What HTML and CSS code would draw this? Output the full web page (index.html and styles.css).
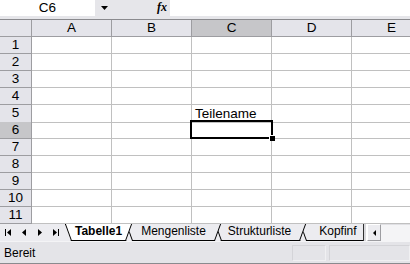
FILE: index.html
```html
<!DOCTYPE html>
<html lang="de">
<head>
  <meta charset="UTF-8">
  <title>Tabelle1</title>
  <link rel="stylesheet" href="styles.css">
</head>
<body>
  <!-- Formula Bar -->
  <div class="formula-bar">
    <div class="name-box">C6</div>
    <div class="name-drop">
      <svg width="7" height="4" viewBox="0 0 7 4"><path d="M0 0h7L3.5 4z" fill="#000"/></svg>
    </div>
    <div class="fx">fx</div>
    <div class="formula-input"></div>
  </div>

  <!-- Sheet -->
  <div class="sheet">
    <div class="row head">
      <div class="corner"></div><div>A</div><div>B</div><div class="sel">C</div><div>D</div><div>E</div>
    </div>
    <div class="row"><div class="rh">1</div><div></div><div></div><div></div><div></div><div></div></div>
    <div class="row"><div class="rh">2</div><div></div><div></div><div></div><div></div><div></div></div>
    <div class="row"><div class="rh">3</div><div></div><div></div><div></div><div></div><div></div></div>
    <div class="row"><div class="rh">4</div><div></div><div></div><div></div><div></div><div></div></div>
    <div class="row"><div class="rh">5</div><div></div><div></div><div class="text">Teilename</div><div></div><div></div></div>
    <div class="row"><div class="rh sel">6</div><div></div><div></div><div class="active"></div><div></div><div></div></div>
    <div class="row"><div class="rh">7</div><div></div><div></div><div></div><div></div><div></div></div>
    <div class="row"><div class="rh">8</div><div></div><div></div><div></div><div></div><div></div></div>
    <div class="row"><div class="rh">9</div><div></div><div></div><div></div><div></div><div></div></div>
    <div class="row"><div class="rh">10</div><div></div><div></div><div></div><div></div><div></div></div>
    <div class="row"><div class="rh">11</div><div></div><div></div><div></div><div></div><div></div></div>
  </div>

  <!-- Sheet Tabs -->
  <div class="tab-bar">
    <div class="tab-nav">
      <span class="nav-btn"><svg width="6" height="7" viewBox="0 0 6 7"><rect width="1" height="7"/><path d="M6 0v7L2 3.5z"/></svg></span>
      <span class="nav-btn"><svg width="4" height="7" viewBox="0 0 4 7"><path d="M4 0v7L0 3.5z"/></svg></span>
      <span class="nav-btn"><svg width="4" height="7" viewBox="0 0 4 7"><path d="M0 0v7L4 3.5z"/></svg></span>
      <span class="nav-btn"><svg width="6" height="7" viewBox="0 0 6 7"><path d="M0 0v7L4 3.5z"/><rect x="5" width="1" height="7"/></svg></span>
    </div>
    <div class="tabs">
      <div class="tab active"><span class="tab-bg"></span><span class="tab-label">Tabelle1</span></div>
      <div class="tab t2"><span class="tab-bg"></span><span class="tab-label">Mengenliste</span></div>
      <div class="tab t3"><span class="tab-bg"></span><span class="tab-label">Strukturliste</span></div>
      <div class="tab t4"><span class="tab-bg"></span><span class="tab-label">Kopfinf</span></div>
    </div>
    <div class="tab-split"></div>
    <div class="hscroll">
      <span class="scroll-btn"><svg width="3" height="6" viewBox="0 0 3 6"><path d="M3 0v6L0 3z"/></svg></span>
      <span class="scroll-track"></span>
    </div>
  </div>

  <!-- Status Bar -->
  <div class="status-bar">
    <span class="status-text">Bereit</span>
    <span class="panel"></span>
    <span class="panel wide"></span>
  </div>
</body>
</html>
```

FILE: styles.css
```css
/* General */
body {
  margin: 0;
  width: 410px;
  height: 264px;
  overflow: hidden;
  font-family: 'Liberation Sans', Arial, sans-serif;
  font-size: 13.5px;
  color: #000;
  background: #fff;
}

/* Formula Bar */
.formula-bar {
  display: flex;
  height: 19px;
  background: #e6e6ea;
  border-bottom: 1px solid #8a8a8e;
}

.name-box {
  width: 95px;
  height: 16px;
  line-height: 16px;
  background: #fff;
  text-align: center;
}

.name-drop {
  width: 16px;
  height: 16px;
  display: flex;
  align-items: center;
  justify-content: center;
  padding-left: 1px;
}

.fx {
  width: 58px;
  height: 16px;
  line-height: 15px;
  text-align: right;
  padding-right: 3px;
  box-sizing: border-box;
  font-family: 'Liberation Serif', serif;
  font-style: italic;
  font-weight: bold;
  font-size: 12px;
}

.formula-input {
  flex: 1;
  height: 16px;
  background: #fff;
}

/* Sheet Grid */
.sheet {
  width: 410px;
  overflow: hidden;
}

.row {
  display: grid;
  grid-template-columns: 32px repeat(5, 80px);
  height: 17px;
}

.row > div {
  box-sizing: border-box;
  border-right: 1px solid #c0c0c0;
  border-bottom: 1px solid #c0c0c0;
  line-height: 16px;
}

.row.head > div,
.row > .rh {
  background: #e4e4ea;
  border-right-color: #9d9da1;
  border-bottom-color: #9d9da1;
  text-align: center;
}

.row > .sel,
.row.head > .sel {
  background: #c6c6c9;
}

.row > .text {
  padding-left: 3px;
  padding-top: 1px;
}

.row > .active {
  position: relative;
}

.row > .active::after {
  content: '';
  position: absolute;
  top: -2px;
  left: -2px;
  right: -2px;
  bottom: -1px;
  border: 2px solid #000;
}

.row > .active::before {
  content: '';
  position: absolute;
  right: -4px;
  bottom: -3px;
  width: 5px;
  height: 5px;
  background: #000;
  border-left: 1px solid #fff;
  border-top: 1px solid #fff;
  z-index: 1;
}

/* Sheet Tabs */
.tab-bar {
  display: flex;
  height: 17px;
  background: #ececf0;
}

.tab-nav {
  display: flex;
  width: 65px;
  flex-shrink: 0;
}

.nav-btn {
  width: 16px;
  display: flex;
  align-items: center;
  justify-content: center;
}

.tabs {
  display: flex;
  width: 298px;
  overflow: hidden;
  flex-shrink: 0;
}

.tab {
  position: relative;
  height: 17px;
  padding: 0 15px;
  margin-right: -6px;
  font-size: 12px;
  line-height: 15px;
  white-space: nowrap;
}

.tab.active {
  padding: 0 10px;
  font-weight: bold;
  z-index: 5;
}

.tab.t2 { z-index: 4; }
.tab.t3 { z-index: 3; padding-left: 13px; }
.tab.t4 { z-index: 2; padding: 0 20px 0 19px; }

.tab-bg {
  position: absolute;
  inset: 0;
  background: #ececf0;
  border-bottom: 1px solid #000;
  clip-path: polygon(0 0, 100% 0, calc(100% - 6px) 100%, 6px 100%);
}

.tab.active .tab-bg {
  background: #fff;
}

.tab-label {
  position: relative;
}

.tab::before,
.tab::after {
  content: '';
  position: absolute;
  top: 0;
  width: 1px;
  height: 17px;
  background: #000;
  z-index: 1;
}

.tab::before {
  left: 3px;
  transform: skewX(20deg);
}

.tab::after {
  right: 3px;
  transform: skewX(-20deg);
}

.tab-split {
  width: 2px;
  flex-shrink: 0;
  background: #d8d8dc;
  border-left: 1px solid #303030;
  border-right: 1px solid #fff;
}

.hscroll {
  display: flex;
  flex: 1;
}

.scroll-btn {
  width: 12px;
  display: flex;
  align-items: center;
  justify-content: center;
  background: #ececf0;
  border-top: 1px solid #fff;
  border-left: 1px solid #fff;
  border-right: 1px solid #9d9da1;
  border-bottom: 1px solid #9d9da1;
}

.scroll-track {
  flex: 1;
  background: #f4f4f6;
  border-top: 1px solid #e0e0e4;
}

/* Status Bar */
.status-bar {
  display: flex;
  align-items: center;
  height: 21px;
  background: #e4e4e8;
  border-top: 1px solid #f4f4f6;
  border-bottom: 1px solid #8a8a8e;
  font-size: 12px;
}

.status-text {
  padding-left: 4px;
  width: 288px;
}

.panel {
  height: 14px;
  width: 32px;
  margin-right: 3px;
  border: 1px solid #d4d4d8;
  border-right-color: #f0f0f2;
  border-bottom-color: #f0f0f2;
}

.panel.wide {
  flex: 1;
  margin-right: 0;
}
```
